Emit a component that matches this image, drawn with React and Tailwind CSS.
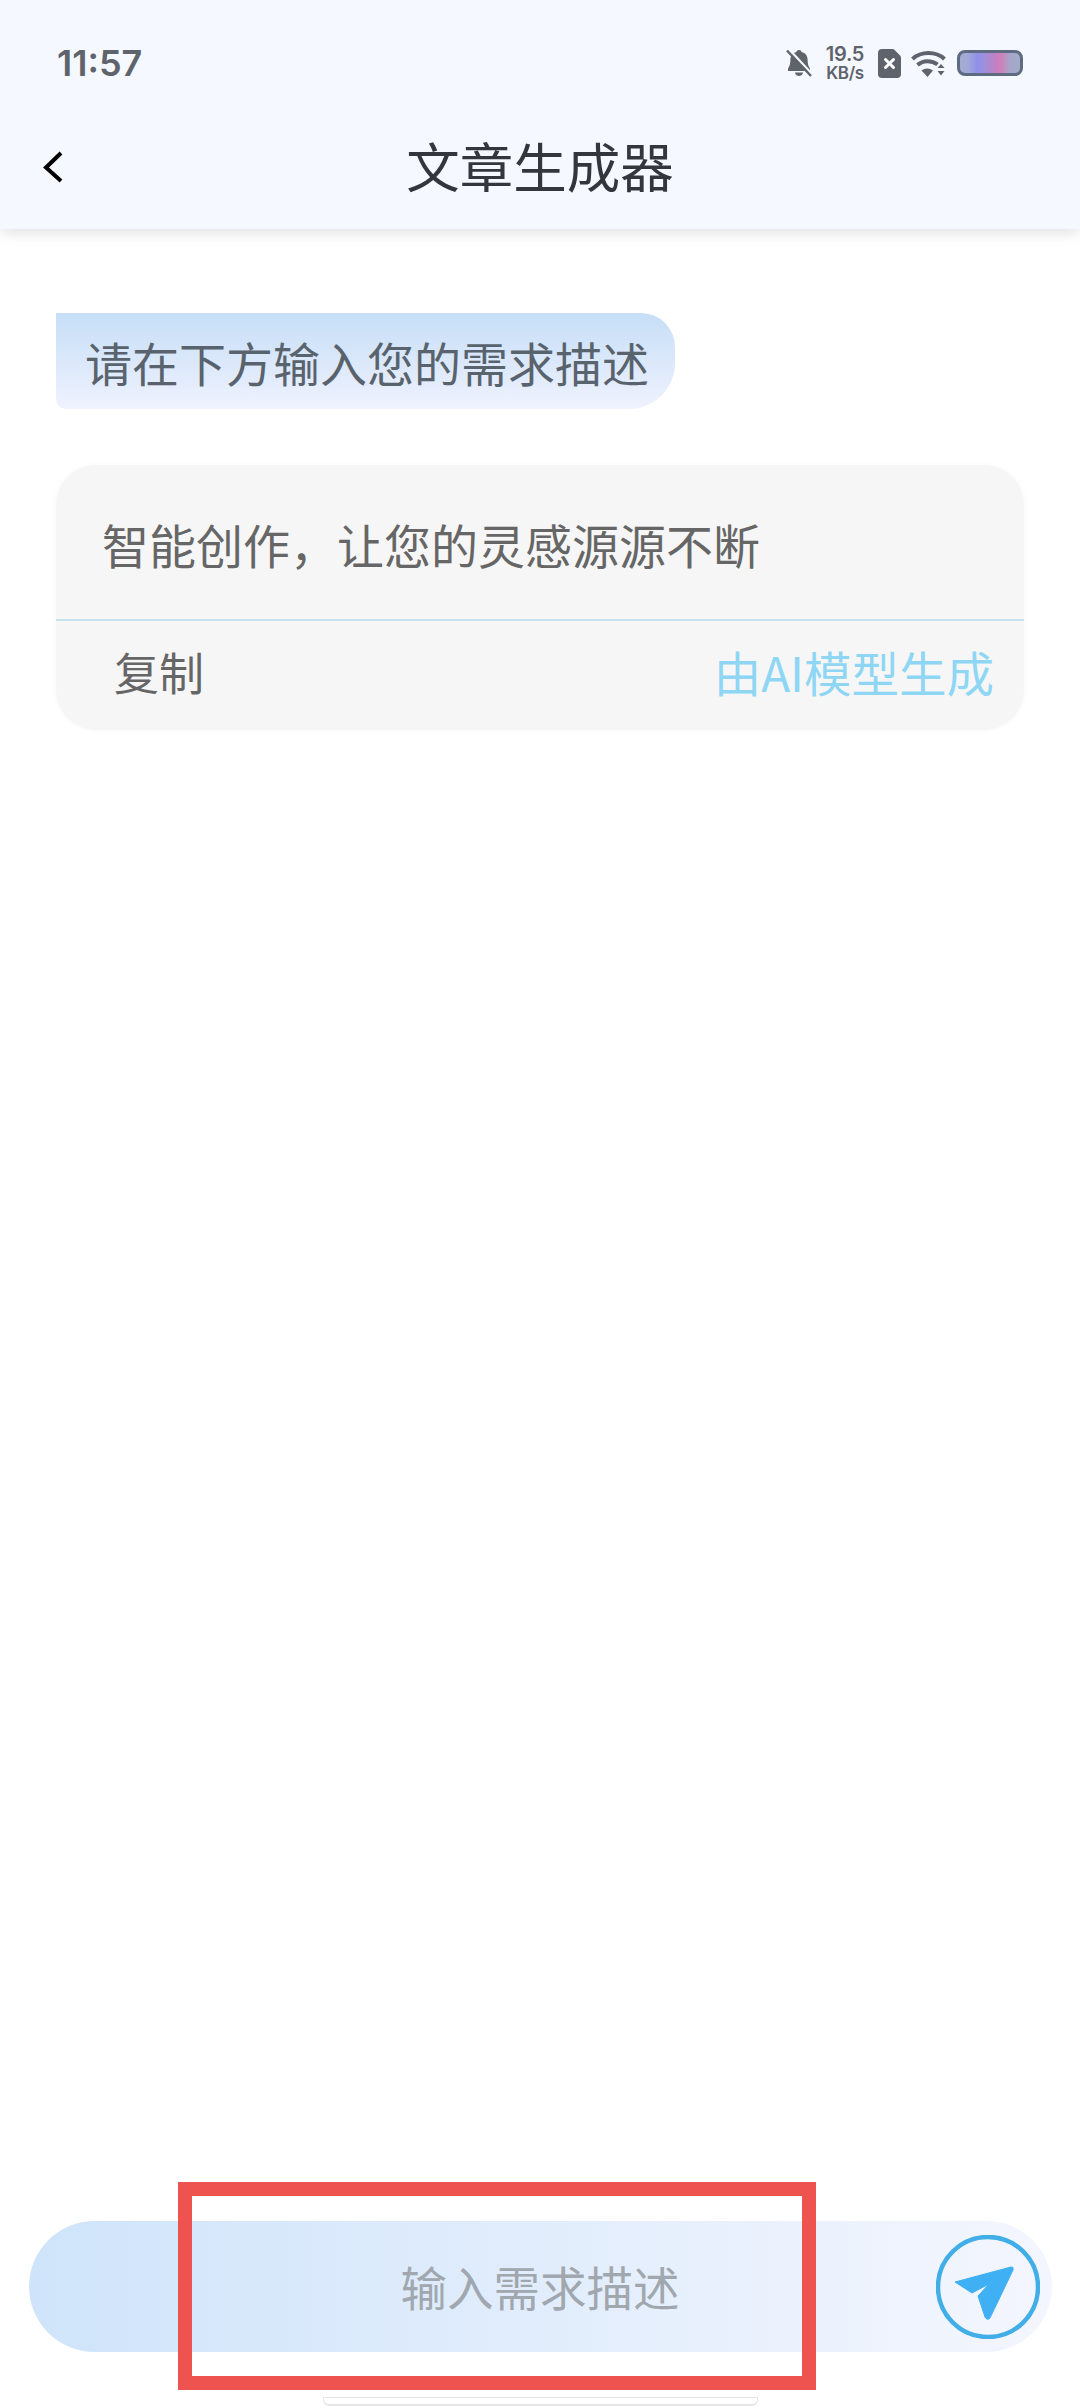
const cjk = "font-['Noto_Sans_CJK_SC','Noto_Sans',sans-serif]";

function StatusIcons() {
  return (
    <div className="flex items-center">
      {/* muted bell */}
      <svg className="w-[26px] h-[28px]" viewBox="0 0 26 28" fill="none">
        <path
          d="M13 1c1.400 0 2.400.8 2.600 1.900 3.800.9 6 3.900 6 7.600 0 3.600.6 6.600 2.400 9v2.500H2v-2.500c1.800-2.400 2.400-5.400 2.400-9 0-3.700 2.200-6.700 6-7.600C10.600 1.800 11.600 1 13 1z"
          fill="#5f636c"
        />
        <path d="M9 23.500h8c-.3 2-1.900 3.500-4 3.500s-3.700-1.500-4-3.500z" fill="#5f636c" />
        <path d="M3 0.500 26 25" stroke="#f5f8ff" strokeWidth="2.500" />
        <path d="M1 1.500 25 27" stroke="#5f636c" strokeWidth="2.400" />
      </svg>
      <div className="ml-[13px] w-[40px] flex flex-col items-center font-['Inter',sans-serif] font-semibold text-[#5f636c] leading-none">
        <span className="text-[20px] h-[21px] leading-[21px] tracking-[-0.3px]">19.5</span>
        <span className="text-[17px] h-[17px] leading-[17px] tracking-[-0.3px]">KB/s</span>
      </div>
      {/* sim with x */}
      <svg className="ml-[13px] w-[23px] h-[29px]" viewBox="0 0 23 29">
        <path
          d="M4 0h10.500a3 3 0 0 1 2.100.9l5.500 5.500a3 3 0 0 1 .9 2.100V25a4 4 0 0 1-4 4H4a4 4 0 0 1-4-4V4a4 4 0 0 1 4-4z"
          fill="#5f636c"
        />
        <path d="M7.500 10.500l8 8M15.500 10.500l-8 8" stroke="#fff" strokeWidth="3" strokeLinecap="round" />
      </svg>
      {/* wifi */}
      <svg className="ml-[10px] w-[35px] h-[27px]" viewBox="0 0 35 27" fill="none">
        <path d="M1.500 9C10 1 25 1 33.500 9" stroke="#5f636c" strokeWidth="4" />
        <path d="M6.500 15c5.500-5 14-5 20-.5" stroke="#5f636c" strokeWidth="4" />
        <path d="M10.500 20.500c3.200-2.800 8-2.800 11.500 0L16.500 27z" fill="#5f636c" />
        <path d="M26.500 18l3.500-4 3.500 4zM26.500 21l3.500 4.500 3.500-4.500z" fill="#5f636c" />
      </svg>
      {/* battery */}
      <div className="ml-[11px] w-[66px] h-[26px] rounded-[8px] border-[3px] border-[#5f6b80] bg-[linear-gradient(90deg,#a3add0_0%,#a1a8d8_14%,#8f90ea_28%,#a08fd8_42%,#c080c4_58%,#d07fb8_68%,#a7a4cc_82%,#a3adc8_100%)]" />
    </div>
  );
}

function SendButton() {
  return (
    <svg className="w-[104px] h-[104px]" viewBox="0 0 104 104" fill="none">
      <circle cx="52" cy="52" r="50" stroke="#41aee8" strokeWidth="4.500" />
      <path
        d="M19 47 L75 32 Q78 31.500 77 35 L54 83 Q51 86 49 82 L42 61 L53 49 L36 58 Z"
        fill="#3fb0f3"
        stroke="#3fb0f3"
        strokeWidth="1"
        strokeLinejoin="round"
      />
    </svg>
  );
}

export default function App() {
  return (
    <div className={`relative w-[1080px] h-[2408px] bg-white flex flex-col overflow-hidden ${cjk}`}>
      {/* Header */}
      <header className="relative z-10 bg-[#f5f8ff] shadow-[0_3px_14px_rgba(0,0,0,0.13)]">
        <div className="h-[126px] pl-[57px] pr-[57px] flex items-center justify-between">
          <span className="font-['Inter',sans-serif] font-semibold text-[36px] text-[#5f636c] leading-none">11:57</span>
          <StatusIcons />
        </div>
        <div className="h-[103px] pb-[26px] px-[43px] grid grid-cols-[1fr_auto_1fr] items-center">
          <svg className="w-[20px] h-[32px] mt-[5px]" viewBox="0 0 20 32" fill="none">
            <path d="M18 2 3 16.500 18 30" stroke="#000" strokeWidth="4" />
          </svg>
          <h1 className="text-[53.500px] leading-none font-normal text-[#33363b]">文章生成器</h1>
          <span />
        </div>
      </header>

      {/* Messages */}
      <main className="flex-1 px-[56px] pt-[84px]">
        <div className="w-[619px] h-[96px] pl-[29px] flex items-center rounded-tr-[34px] rounded-br-[46px] rounded-bl-[10px] bg-gradient-to-b from-[#c6def7] to-[#eff2fe] text-[47px] leading-none text-[#59636d] whitespace-nowrap">
          请在下方输入您的需求描述
        </div>

        <div className="mt-[56px] w-[968px] h-[265px] rounded-[40px] bg-[#f6f6f7] flex flex-col shadow-[0_0_6px_rgba(0,0,0,0.03)]">
          <div className="h-[154px] pl-[46px] pt-[2px] flex items-center text-[47px] leading-none text-[#666666] whitespace-nowrap">
            智能创作，让您的灵感源源不断
          </div>
          <div className="h-[2px] bg-[#c5e4ec]" />
          <div className="flex-1 pl-[58px] pr-[30px] pb-[8px] flex items-center justify-between leading-none">
            <span className="text-[45px] text-[#666666]">复制</span>
            <span className="text-[47.500px] text-[#8ed6f3]">由AI模型生成</span>
          </div>
        </div>
      </main>

      {/* Input */}
      <footer className="flex flex-col items-center">
        <div className="w-[1023px] h-[131px] px-[12px] rounded-full bg-gradient-to-r from-[#cfe4fa] to-[#f4f6fe] grid grid-cols-[1fr_auto_1fr] items-center">
          <span />
          <span className="text-[46.500px] leading-none text-[#a0a7ae]">输入需求描述</span>
          <div className="flex justify-end">
            <SendButton />
          </div>
        </div>
        <div className="mt-[45px] mb-[2px] w-[435px] h-[9px] rounded-b-[6px] border-x border-b-2 border-t border-[#e6e6e6] bg-white" />
      </footer>

      {/* Red highlight annotation */}
      <div className="absolute left-[178px] top-[2182px] w-[638px] h-[208px] border-[14px] border-[#ef5350] z-20" />
    </div>
  );
}
